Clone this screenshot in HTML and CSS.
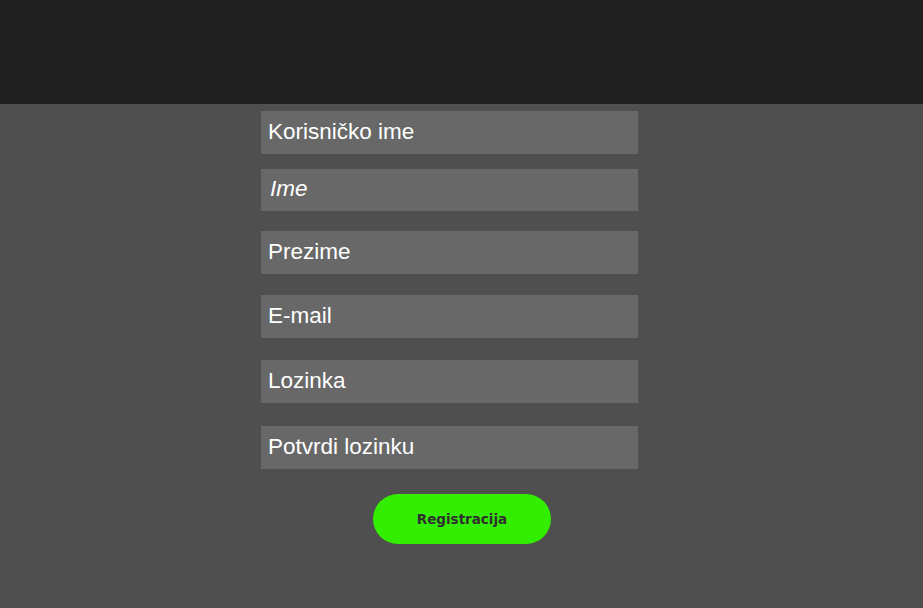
FILE: index.html
```html
<!DOCTYPE html>
<html lang="hr">
<head>
<meta charset="utf-8">
<title>Registracija</title>
<link rel="stylesheet" href="styles.css">
</head>
<body>
<header class="topbar"></header>
<main class="content">
  <form class="form">
    <input class="field f1" type="text" placeholder="Korisničko ime">
    <input class="field f2 italic" type="text" placeholder="Ime">
    <input class="field f3" type="text" placeholder="Prezime">
    <input class="field f4" type="email" placeholder="E-mail">
    <input class="field f5" type="password" placeholder="Lozinka">
    <input class="field f6" type="password" placeholder="Potvrdi lozinku">
    <button class="submit" type="button">Registracija</button>
  </form>
</main>
</body>
</html>
```
FILE: styles.css
```css
* { box-sizing: border-box; }
html, body { margin: 0; padding: 0; height: 100%; }
body {
  background: #4f4f4f;
  font-family: "Liberation Sans", Arial, sans-serif;
  display: flex;
  flex-direction: column;
}
.topbar {
  height: 104px;
  background: #212121;
  flex: none;
}
.content {
  flex: 1;
  display: flex;
  justify-content: flex-start;
  padding-left: 261px;
}
.form {
  width: 377px;
  display: flex;
  flex-direction: column;
  align-items: stretch;
}
.field {
  display: block;
  width: 377px;
  height: 43px;
  border: none;
  outline: none;
  background: #686868;
  color: #ffffff;
  font-family: "Liberation Sans", Arial, sans-serif;
  font-size: 22.5px;
  padding: 0 7px 2px;
  margin: 0;
}
.field::placeholder { color: #ffffff; opacity: 1; }
.italic { font-style: italic; padding-left: 9px; }
.f1 { margin-top: 7px; }
.f2 { margin-top: 15px; height: 42px; }
.f3 { margin-top: 20px; }
.f4 { margin-top: 21px; }
.f5 { margin-top: 22px; }
.f6 { margin-top: 23px; }
.submit {
  align-self: flex-start;
  margin-top: 25px;
  margin-left: 112px;
  width: 178px;
  height: 50px;
  border: none;
  border-radius: 25px;
  background: #33ee00;
  color: #303030;
  font-family: "DejaVu Sans", Verdana, sans-serif;
  font-weight: bold;
  font-size: 13.5px;
  padding: 0;
}
```
